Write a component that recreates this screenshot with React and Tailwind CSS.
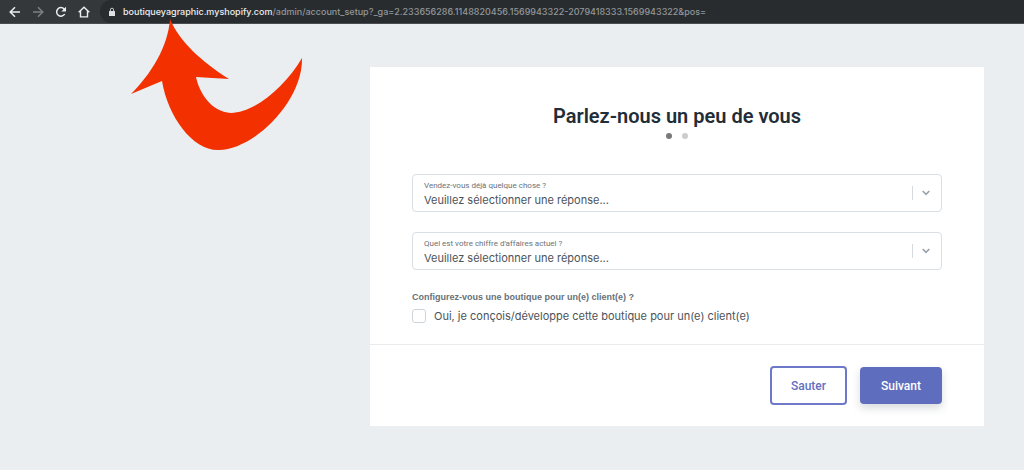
import React, { useId } from "react";

function BackIcon() {
  return (
    <svg viewBox="0 0 12 12" className="size-3" fill="none" stroke="currentColor" strokeWidth="1.5" aria-hidden="true">
      <path d="M11 6H1.6M6 1.2 1.2 6 6 10.8" />
    </svg>
  );
}

function ForwardIcon() {
  return (
    <svg viewBox="0 0 12 12" className="size-3" fill="none" stroke="currentColor" strokeWidth="1.5" aria-hidden="true">
      <path d="M1 6h9.4M6 1.2 10.8 6 6 10.8" />
    </svg>
  );
}

function ReloadIcon() {
  return (
    <svg viewBox="0 0 12 12" className="size-3" fill="none" aria-hidden="true">
      <path d="M9.7 8A4.3 4.3 0 1 1 9 2.9L10 4" stroke="currentColor" strokeWidth="1.5" />
      <path d="M11 .8v4.6H6.4z" fill="currentColor" />
    </svg>
  );
}

function HomeIcon() {
  return (
    <svg viewBox="0 0 12 12" className="size-3" fill="none" stroke="currentColor" strokeWidth="1.4" aria-hidden="true">
      <path d="M.7 6.3 6 1.2l5.3 5.1M2.5 5v5.9h7V5" />
    </svg>
  );
}

function LockIcon() {
  return (
    <svg viewBox="0 0 8 10" className="h-2.5 w-2 shrink-0" fill="none" aria-hidden="true">
      <rect x="1" y="4" width="6" height="5" rx=".6" fill="#dfe1e3" />
      <path d="M2.4 4.2V2.8a1.6 1.6 0 0 1 3.2 0v1.4" stroke="#dfe1e3" strokeWidth=".9" />
    </svg>
  );
}

function NavButton({ label, dim, children }) {
  return (
    <button
      type="button"
      aria-label={label}
      className={dim ? "text-[#7c8083]" : "text-[#eceeef]"}
    >
      {children}
    </button>
  );
}

function BrowserBar() {
  return (
    <header className="flex h-6 items-center border-b border-[#4a4d50] bg-[#35383b] pl-[9px]">
      <nav className="flex gap-[11px]" aria-label="Navigation">
        <NavButton label="Retour"><BackIcon /></NavButton>
        <NavButton label="Avancer" dim><ForwardIcon /></NavButton>
        <NavButton label="Actualiser"><ReloadIcon /></NavButton>
        <NavButton label="Accueil"><HomeIcon /></NavButton>
      </nav>
      <div className="ml-2.5 flex h-full flex-1 items-center gap-[7px] overflow-hidden rounded-l-full bg-[#282c2f] pl-2">
        <LockIcon />
        <div
          role="textbox"
          tabIndex={0}
          aria-label="Adresse"
          className="whitespace-nowrap font-[Inter,sans-serif] text-[9px] font-medium leading-4 text-[#92979a]"
        >
          <span className="text-[#eceeef]">boutiqueyagraphic.myshopify.com</span>
          <span>/admin/account_setup?_ga=2.233656286.1148820456.1569943322-2079418333.1569943322&amp;pos=</span>
        </div>
      </div>
    </header>
  );
}

function SelectField({ label }) {
  const id = useId();
  return (
    <div className="flex items-center rounded border border-[#d9dfe2] bg-white pl-[11px]">
      <div className="flex min-w-0 flex-1 flex-col pb-[3px] pt-[5px]">
        <label htmlFor={id} className="text-[8px] leading-3 text-[#6a7278]">{label}</label>
        <select
          id={id}
          className="w-full appearance-none bg-transparent font-[Inter,sans-serif] text-[11px] leading-4 text-[#4c5359] outline-none"
        >
          <option>Veuillez sélectionner une réponse...</option>
        </select>
      </div>
      <span className="h-3.5 w-px bg-[#d5dade]" />
      <svg viewBox="0 0 8 6" className="ml-[9px] mr-[11px] h-1.5 w-2" fill="none" stroke="#98a2ad" strokeWidth="1.6" aria-hidden="true">
        <path d="m.7 1 3.3 3.3L7.3 1" />
      </svg>
    </div>
  );
}

function SetupCard() {
  return (
    <form className="w-full max-w-[614px] bg-white" onSubmit={(e) => e.preventDefault()}>
      <div className="flex flex-col px-[42px] pb-5 pt-[35px]">
        <h1 className="text-center text-[20px] font-semibold leading-7 text-[#222d38]">Parlez-nous un peu de vous</h1>
        <div className="mt-[3px] flex justify-center gap-2.5">
          <span className="size-1.5 rounded-full bg-[#78797b]" />
          <span className="size-1.5 rounded-full bg-[#cbcccd]" />
        </div>
        <div className="mt-[35px] flex flex-col gap-5">
          <SelectField label="Vendez-vous déjà quelque chose ?" />
          <SelectField label="Quel est votre chiffre d'affaires actuel ?" />
        </div>
        <fieldset className="mt-[19px]">
          <legend className="font-['Liberation_Sans',sans-serif] text-[9px] font-bold leading-4 text-[#68717a]">
            Configurez-vous une boutique pour un(e) client(e) ?
          </legend>
          <label className="mt-[3px] flex items-center gap-2 font-[Inter,sans-serif] text-[11px] leading-4 text-[#4c5359]">
            <input
              type="checkbox"
              className="size-3.5 appearance-none rounded-[3px] border border-[#cdd5da] bg-white checked:bg-[#5c6ac0]"
            />
            Oui, je conçois/développe cette boutique pour un(e) client(e)
          </label>
        </fieldset>
      </div>
      <div className="flex items-center justify-end gap-[13px] border-t border-[#e8eaec] px-[42px] py-[21px] text-[12px] font-medium">
        <button type="button" className="h-[39px] rounded border-2 border-[#6d79c8] px-[19px] text-[#6370c0]">
          Sauter
        </button>
        <button type="submit" className="h-[37px] rounded bg-[#5f6dbe] px-[21px] text-white shadow-[0_4px_8px_rgba(40,50,60,0.18)]">
          Suivant
        </button>
      </div>
    </form>
  );
}

export default function App() {
  return (
    <div className="relative min-h-screen bg-[#ebeef1] font-[Roboto,sans-serif]">
      <BrowserBar />
      <main className="flex justify-end py-[43px] pl-10 pr-10">
        <SetupCard />
      </main>
      <svg
        viewBox="0 0 173 132"
        className="pointer-events-none absolute left-[130px] top-[19px] h-[132px] w-[173px]"
        fill="#f23000"
        aria-hidden="true"
      >
        <path d="M40 0C49 22 72 43 99 60L66 58C69 73 81 93 101 94C124 94 155 68 172 39C173 83 123 131 89 131C63 132 38 98 32 62L1 75C21 55 38 28 40 0Z" />
      </svg>
    </div>
  );
}
